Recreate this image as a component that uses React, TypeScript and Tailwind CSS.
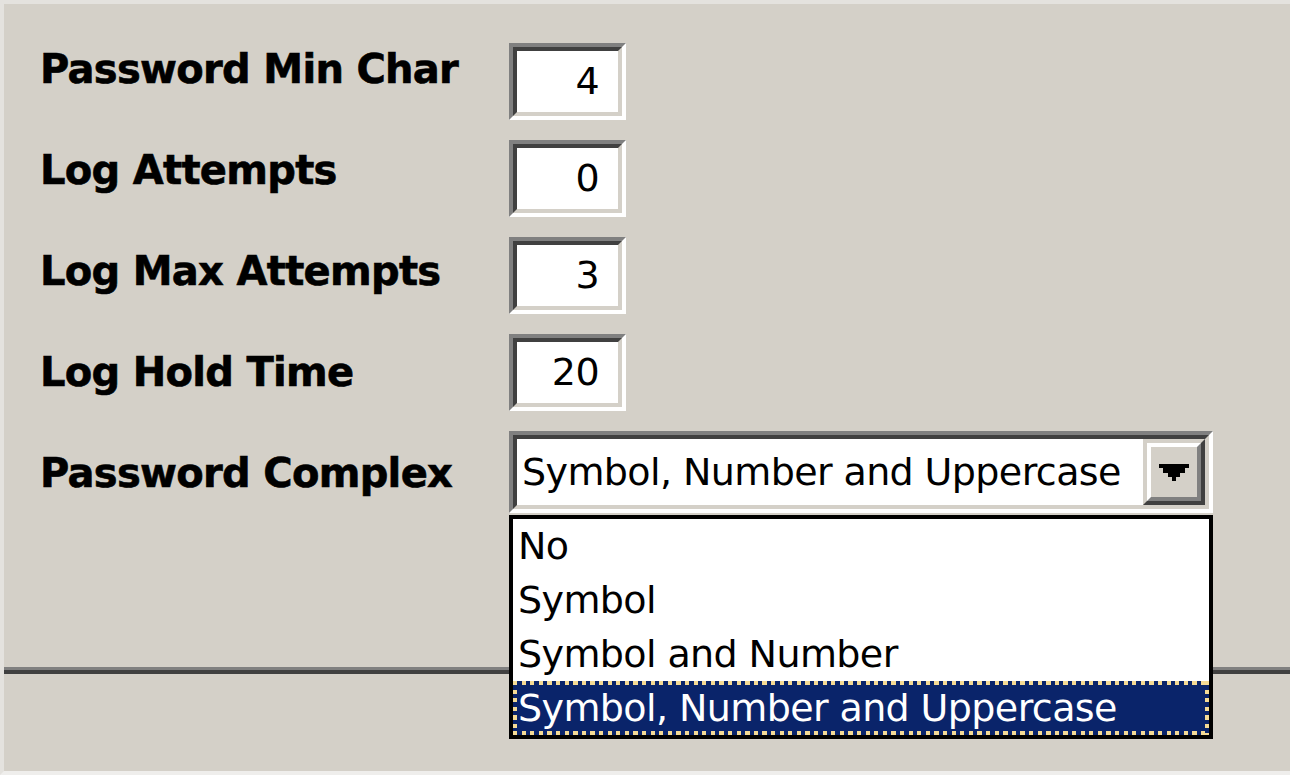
import React from 'react'

const labels = ['Password Min Char', 'Log Attempts', 'Log Max Attempts', 'Log Hold Time', 'Password Complex']
const values = ['4', '0', '3', '20']
const options = ['No', 'Symbol', 'Symbol and Number', 'Symbol, Number and Uppercase']

function Sunken({ className = '', children }: { className?: string; children?: React.ReactNode }) {
  return (
    <div className={`border-4 border-t-[#808080] border-l-[#808080] border-r-white border-b-white ${className}`}>
      <div className="h-full w-full border-4 border-t-[#404040] border-l-[#404040] border-r-[#d4d0c8] border-b-[#d4d0c8] bg-white">
        {children}
      </div>
    </div>
  )
}

function ArrowButton() {
  return (
    <div className="h-full w-[62px] shrink-0 border-4 border-t-[#d4d0c8] border-l-[#d4d0c8] border-r-[#404040] border-b-[#404040]">
      <div className="flex h-full w-full items-center justify-center border-4 border-t-white border-l-white border-r-[#808080] border-b-[#808080] bg-[#d4d0c8]">
        <svg width="30" height="17" viewBox="0 0 7 4" shapeRendering="crispEdges">
          <path d="M0 0h7v1h-1v1h-1v1h-1v1h-1v-1h-1v-1h-1v-1h-1z" fill="#000" />
        </svg>
      </div>
    </div>
  )
}

export default function App() {
  return (
    <div
      className="relative flex h-[775px] w-[1290px] flex-col overflow-hidden border-t-4 border-l-4 border-b-4 border-t-[#e4e2de] border-l-[#e4e2de] border-b-[#efeeec] bg-[#d4d0c8] text-black"
      style={{ fontFamily: '"DejaVu Sans", Verdana, sans-serif' }}
    >
      <div className="flex h-[663px]">
        {/* labels */}
        <div className="flex w-[505px] flex-col pl-[36px] pt-[45px]">
          {labels.map((l) => (
            <div
              key={l}
              className="h-[101px] text-[40px] font-bold leading-[40px] tracking-[-0.7px] whitespace-nowrap [-webkit-text-stroke:0.6px_#000]"
            >
              {l}
            </div>
          ))}
        </div>

        {/* fields */}
        <div className="flex flex-col gap-[20px] pt-[39px] text-[38px] tracking-[-0.6px]">
          {values.map((v, i) => (
            <Sunken key={i} className="h-[77px] w-[117px]">
              <div className="h-full pr-[19px] text-right leading-[61px]">{v}</div>
            </Sunken>
          ))}

          <div className="relative">
            <Sunken className="h-[82px] w-[704px]">
              <div className="flex h-full">
                <div className="flex-1 pl-[5px] leading-[66px] whitespace-nowrap">Symbol, Number and Uppercase</div>
                <ArrowButton />
              </div>
            </Sunken>

            {/* open dropdown list */}
            <div className="absolute left-0 top-full mt-[2px] w-[704px] border-4 border-black bg-white">
              {options.map((o, i) => {
                const selected = i === options.length - 1
                return (
                  <div
                    key={o}
                    className={`relative h-[54px] pl-[5px] leading-[54px] whitespace-nowrap ${selected ? 'bg-[#0a246a] text-white' : ''}`}
                  >
                    {o}
                    {selected && (
                      <>
                        <div className="absolute left-0 right-0 top-0 h-[4px] bg-[repeating-linear-gradient(90deg,#f5db95_0_4.3px,transparent_4.3px_8.6px)]" />
                        <div className="absolute left-0 right-0 bottom-0 h-[4px] bg-[repeating-linear-gradient(90deg,#f5db95_0_4.3px,transparent_4.3px_8.6px)]" />
                        <div className="absolute left-0 top-0 bottom-0 w-[4px] bg-[repeating-linear-gradient(180deg,#f5db95_0_4.3px,transparent_4.3px_8.6px)]" />
                        <div className="absolute right-0 top-0 bottom-0 w-[4px] bg-[repeating-linear-gradient(180deg,#f5db95_0_4.3px,transparent_4.3px_8.6px)]" />
                      </>
                    )}
                  </div>
                )
              })}
            </div>
          </div>
        </div>
      </div>

      {/* separator */}
      <div className="h-[7px] border-t-[3px] border-[#808080] bg-[#404040]" />
    </div>
  )
}
